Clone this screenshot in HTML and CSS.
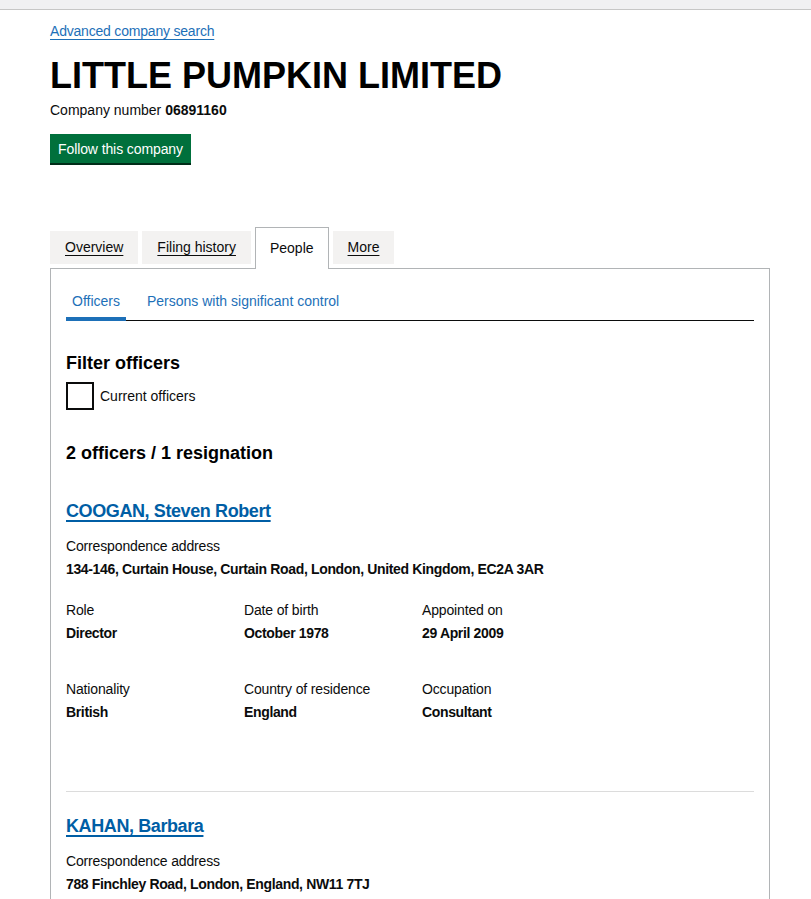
FILE: index.html
```html
<!DOCTYPE html>
<html lang="en">
<head>
  <meta charset="UTF-8">
  <title>LITTLE PUMPKIN LIMITED - People</title>
  <link rel="stylesheet" href="styles.css">
</head>
<body>
  <div class="topbar"></div>
  <div class="page">
    <a class="back-link" href="#">Advanced company search</a>
    <h1 class="company-name">LITTLE PUMPKIN LIMITED</h1>
    <p class="company-number">Company number <b>06891160</b></p>
    <button class="follow-btn">Follow this company</button>

    <ul class="tabs">
      <li class="tab"><a href="#">Overview</a></li>
      <li class="tab"><a href="#">Filing history</a></li>
      <li class="tab active"><span>People</span></li>
      <li class="tab"><a href="#">More</a></li>
    </ul>

    <div class="panel">
      <ul class="subnav">
        <li class="active"><a href="#">Officers</a></li>
        <li><a href="#">Persons with significant control</a></li>
      </ul>

      <h2 class="heading">Filter officers</h2>
      <label class="check">
        <span class="check-box"></span>
        <span>Current officers</span>
      </label>

      <h2 class="heading count">2 officers / 1 resignation</h2>

      <div class="officer">
        <h2 class="officer-name"><a href="#">COOGAN, Steven Robert</a></h2>
        <div class="field address">
          <div class="label">Correspondence address</div>
          <div class="value">134-146, Curtain House, Curtain Road, London, United Kingdom, EC2A 3AR</div>
        </div>
        <div class="officer-row">
          <div class="field"><div class="label">Role</div><div class="value">Director</div></div>
          <div class="field"><div class="label">Date of birth</div><div class="value">October 1978</div></div>
          <div class="field"><div class="label">Appointed on</div><div class="value">29 April 2009</div></div>
        </div>
        <div class="officer-row">
          <div class="field"><div class="label">Nationality</div><div class="value">British</div></div>
          <div class="field"><div class="label">Country of residence</div><div class="value">England</div></div>
          <div class="field"><div class="label">Occupation</div><div class="value">Consultant</div></div>
        </div>
      </div>

      <div class="officer">
        <h2 class="officer-name"><a href="#">KAHAN, Barbara</a></h2>
        <div class="field address">
          <div class="label">Correspondence address</div>
          <div class="value">788 Finchley Road, London, England, NW11 7TJ</div>
        </div>
      </div>
    </div>
  </div>
</body>
</html>
```

FILE: styles.css
```css
body { margin: 0; font-family: "Liberation Sans", Arial, sans-serif; font-size: 14px; line-height: 20px; color: #0b0c0c; background: #fff; }
.topbar { height: 9px; background: #f0f0f2; border-bottom: 1px solid #c6c6c6; }
.page { width: 720px; margin-left: 50px; padding-top: 11px; }

.back-link { color: #1d70b8; text-decoration: underline; text-underline-offset: 3px; letter-spacing: -0.2px; }
.company-name { font-size: 36px; line-height: 40px; font-weight: bold; margin: 15px 0 4px; color: #000; }
.company-number { margin: 0; }
.follow-btn { display: block; margin-top: 14px; font-family: inherit; font-size: 14px; line-height: 20px; color: #fff; background: #00703c; border: 0; padding: 5px 8px 4px; box-shadow: 0 2px 0 #002d18; cursor: pointer; letter-spacing: -0.1px; }

.tabs { list-style: none; margin: 64px 0 0; padding: 0; display: flex; gap: 4px; align-items: flex-start; }
.tab { margin-top: 4px; background: #f3f2f1; padding: 6px 15px 7px; }
.tab a { color: #0b0c0c; text-decoration: underline; text-underline-offset: 3px; }
.tab.active { margin-top: 0; margin-bottom: -1px; position: relative; background: #fff; border: 1px solid #b1b4b6; border-bottom: 0; padding: 10px 14px 11px; }

.panel { border: 1px solid #b1b4b6; padding: 16px 15px 40px; }

.subnav { list-style: none; margin: 0; padding: 0; display: flex; gap: 15px; border-bottom: 1px solid #0b0c0c; }
.subnav li { padding: 6px 6px 6px; margin-bottom: -1px; border-bottom: 4px solid transparent; }
.subnav li.active { border-bottom-color: #1d70b8; }
.subnav a { color: #1d70b8; text-decoration: none; }

.heading { font-size: 18px; line-height: 25px; font-weight: bold; margin: 30px 0 6px; color: #000; }
.check { display: flex; align-items: center; gap: 6px; }
.check-box { width: 24px; height: 24px; border: 2px solid #0b0c0c; }
.heading.count { margin-top: 31px; margin-bottom: 0; }

.officer { padding-top: 33px; }
.officer + .officer { margin-top: 69px; padding-top: 22px; border-top: 1px solid #dcdcdc; }
.officer-name { font-size: 18px; line-height: 25px; font-weight: bold; margin: 0 0 12px; letter-spacing: -0.4px; }
.officer-name a { color: #005ea5; text-decoration: underline; text-decoration-thickness: 2px; text-underline-offset: 3px; }

.field .label { margin-bottom: 3px; letter-spacing: -0.15px; }
.field .value { font-weight: bold; letter-spacing: -0.35px; }
.address { margin-bottom: 21px; }
.officer-row { display: grid; grid-template-columns: repeat(3, 178px); }
.officer-row + .officer-row { margin-top: 36px; }
```
